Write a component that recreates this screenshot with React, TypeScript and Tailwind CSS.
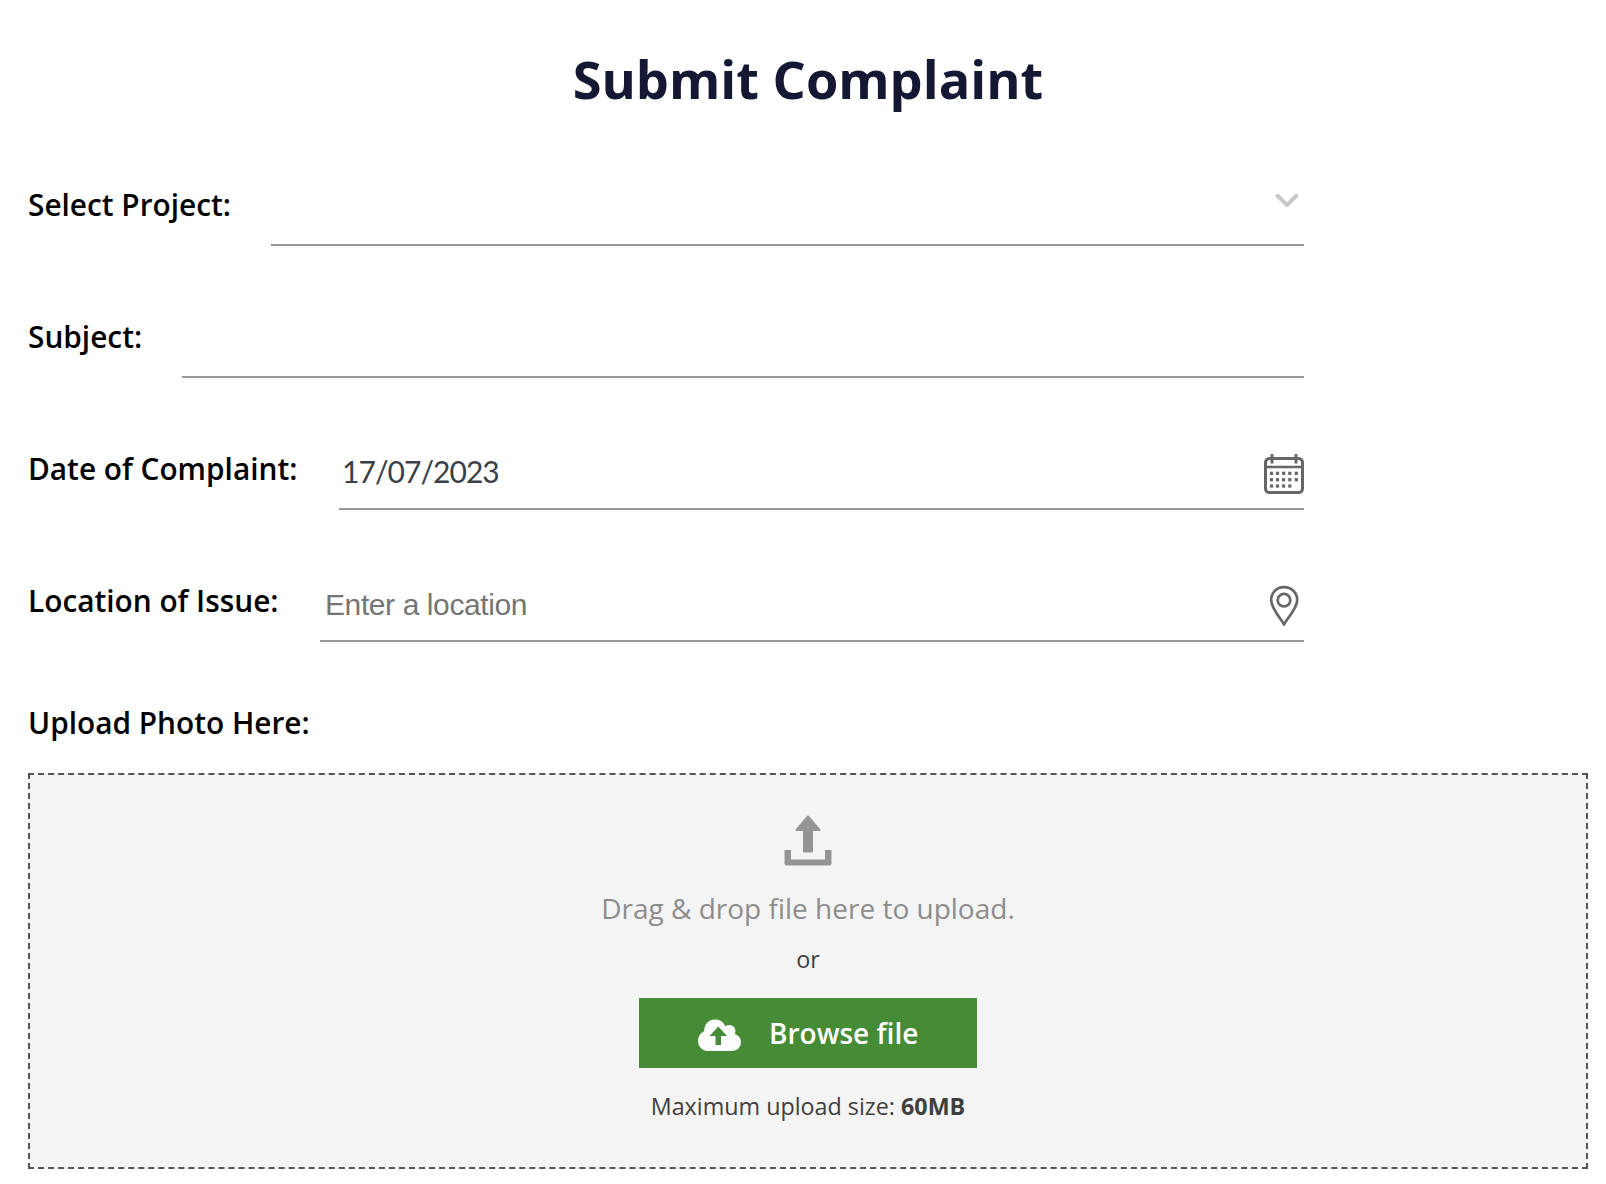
import React, { useState } from 'react';

interface FieldProps {
  id: string;
  label: string;
  labelWidth: string;
  children: React.ReactNode;
}

function Field({ id, label, labelWidth, children }: FieldProps) {
  return (
    <div className="flex h-[92px] w-[1276px] mb-10">
      <label
        htmlFor={id}
        className={`${labelWidth} shrink-0 pt-[31px] text-[29.8px] leading-10 font-semibold whitespace-nowrap text-black`}
      >
        {label}
      </label>
      <div className="flex min-w-0 flex-1 border-b-2 border-[#999999]">{children}</div>
    </div>
  );
}

function ChevronIcon() {
  return (
    <svg className="mt-[37px] mr-[5px] h-[18px] w-6 shrink-0" viewBox="0 0 24 18" fill="none">
      <path d="M2.6 4.8L12 14L21.4 4.8" stroke="#c8c8c8" strokeWidth="4" strokeLinecap="round" strokeLinejoin="round" />
    </svg>
  );
}

function CalendarIcon() {
  const dots = [
    [7.5, 19.3], [13.5, 19.3], [19.6, 19.3], [25.8, 19.3], [32.3, 19.3],
    [7.5, 25.7], [13.5, 25.7], [19.6, 25.7], [25.8, 25.7], [32.3, 25.7],
    [7.5, 32], [13.5, 32], [19.6, 32], [25.8, 32],
  ];
  return (
    <svg className="mt-[36px] h-10 w-10 shrink-0" viewBox="0 0 40 40" fill="none" stroke="#666666">
      <rect x="1.5" y="4.5" width="37" height="34" rx="4" strokeWidth="3" />
      <path d="M1 13H39" strokeWidth="2.6" />
      <path d="M8 0V9.5M32 0V9.5" strokeWidth="3" />
      {dots.map(([x, y]) => (
        <rect key={`${x}-${y}`} x={x - 1.6} y={y - 1.6} width="3.2" height="3.2" fill="#666666" stroke="none" />
      ))}
    </svg>
  );
}

function PinIcon() {
  return (
    <svg className="mt-[35px] mr-[5px] h-[42px] w-[29px] shrink-0" viewBox="0 0 29 42" fill="none" stroke="#666666" strokeWidth="2.7">
      <path d="M14 39.5C11.5 34 1.2 23.8 1.2 14.9C1.2 7.6 6.8 2.2 14 2.2S27.2 7.6 27.2 14.9C27.2 23.8 16.5 34 14 39.5Z" strokeLinejoin="round" />
      <circle cx="14" cy="15.2" r="6.3" />
    </svg>
  );
}

function UploadIcon() {
  return (
    <svg className="h-[51px] w-12" viewBox="0 0 48 51" fill="#949494">
      <path
        d="M24 1.5L35.5 15H28V36.5H20V15H12.5Z"
        stroke="#949494"
        strokeWidth="2"
        strokeLinejoin="round"
      />
      <path d="M0.5 35H7V44.5H41V35H47.5V48Q47.5 50.5 45 50.5H3Q0.5 50.5 0.5 48Z" />
    </svg>
  );
}

function CloudUploadIcon() {
  return (
    <svg className="mt-1 h-8 w-[43px] shrink-0" viewBox="0 0 43 32">
      <path
        d="M10 32C4.3 32 0 27.5 0 22C0 17.6 2.5 14 6.2 12.3C6 5.3 10.8 0.5 17 0.5C21.9 0.5 25.6 3.2 27.3 7.2C31.8 4.4 37.4 7.2 37.4 12.2C37.4 13.2 37.1 14.1 36.7 14.9C40.4 15.9 43 19 43 23C43 28 39 32 34 32Z"
        fill="#ffffff"
      />
      <path d="M20.3 7.5L29 17H23V26H17.5V17H11.5Z" fill="#468b35" />
    </svg>
  );
}

export default function App() {
  const [project, setProject] = useState('');
  const [subject, setSubject] = useState('');
  const [date, setDate] = useState('17/07/2023');
  const [location, setLocation] = useState('');

  return (
    <div className="h-[1184px] w-[1606px] overflow-hidden bg-white pl-7 font-['Open_Sans',sans-serif]">
      <h1 className="w-[1560px] pt-[42px] mb-[38px] text-center text-[52.3px] leading-[74px] font-bold text-[#141833]">
        Submit Complaint
      </h1>

      <form>
        <Field id="project" label="Select Project:" labelWidth="w-[243px]">
          <select
            id="project"
            value={project}
            onChange={e => setProject(e.target.value)}
            className="min-w-0 flex-1 appearance-none bg-transparent outline-none"
          >
            <option value="" />
          </select>
          <ChevronIcon />
        </Field>

        <Field id="subject" label="Subject:" labelWidth="w-[154px]">
          <input
            id="subject"
            value={subject}
            onChange={e => setSubject(e.target.value)}
            className="min-w-0 flex-1 bg-transparent outline-none"
          />
        </Field>

        <Field id="date" label="Date of Complaint:" labelWidth="w-[311px]">
          <input
            id="date"
            value={date}
            onChange={e => setDate(e.target.value)}
            className="min-w-0 flex-1 bg-transparent pt-[17px] pl-[3px] font-['Lato',sans-serif] text-[30px] tracking-[-0.95px] text-[#3b4047] outline-none"
          />
          <CalendarIcon />
        </Field>

        <Field id="location" label="Location of Issue:" labelWidth="w-[292px]">
          <input
            id="location"
            value={location}
            placeholder="Enter a location"
            onChange={e => setLocation(e.target.value)}
            className="min-w-0 flex-1 bg-transparent pt-[18px] pl-[5px] font-['Liberation_Sans',sans-serif] text-[30px] tracking-[-0.4px] outline-none placeholder:text-[#757575]"
          />
          <PinIcon />
        </Field>

        <p className="pt-[21px] mb-[30px] text-[29.8px] leading-10 font-semibold text-black">
          Upload Photo Here:
        </p>

        <div className="flex h-[396px] w-[1560px] flex-col items-center border-2 border-dashed border-[#555555] bg-[#f4f4f4] pt-10">
          <UploadIcon />
          <p className="mt-[22px] text-[28px] leading-10 text-[#8c8c8c]">Drag &amp; drop file here to upload.</p>
          <p className="mt-[15px] text-[23.4px] leading-8 text-[#3f3f3f]">or</p>
          <button type="button" className="mt-[23px] flex h-[70px] w-[338px] items-center bg-[#468b35] pl-[59px] text-white">
            <CloudUploadIcon />
            <span className="ml-7 text-[28px] leading-10 font-semibold whitespace-nowrap">Browse file</span>
          </button>
          <p className="mt-[22px] text-[23.3px] leading-8 text-[#3f3f3f]">
            Maximum upload size: <strong className="font-bold">60MB</strong>
          </p>
        </div>
      </form>
    </div>
  );
}
